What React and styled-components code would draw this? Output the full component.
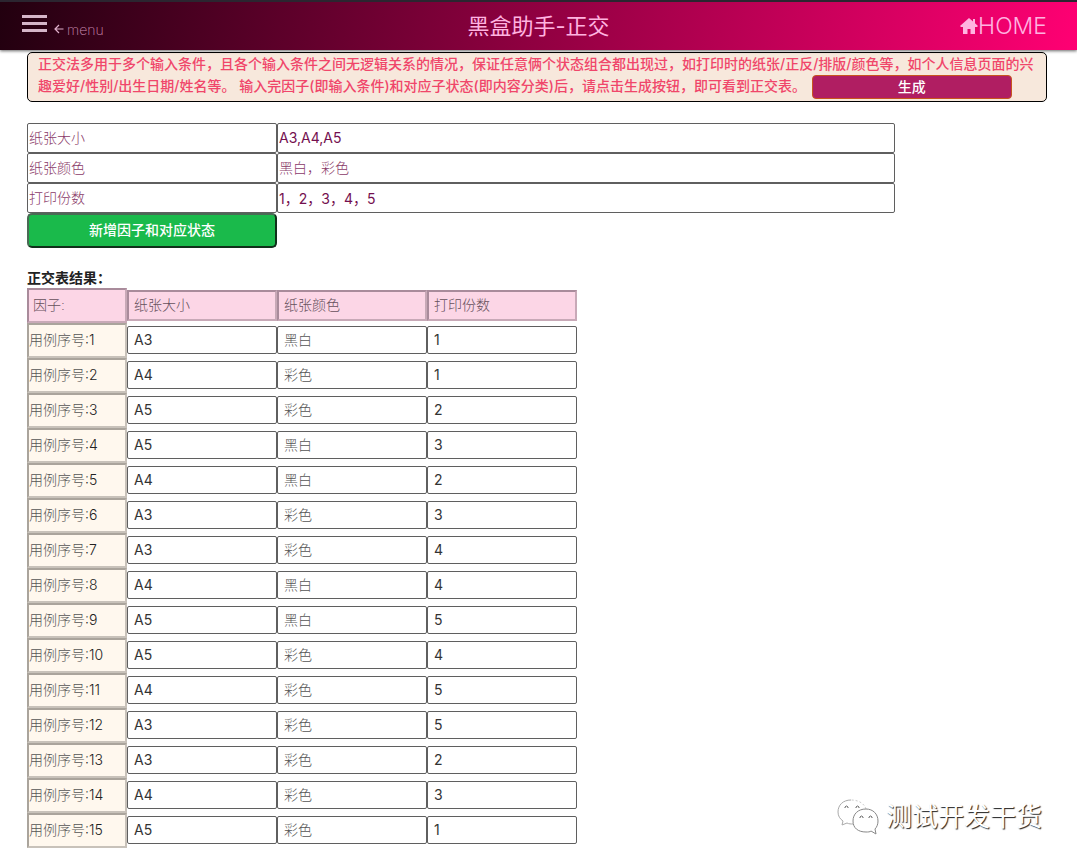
import React, { useState } from "react";
import styled, { createGlobalStyle } from "styled-components";

const GlobalStyle = createGlobalStyle`
  * {
    box-sizing: border-box;
  }
  body {
    margin: 0;
    background-color: #fff;
    color: #333;
    font-family: Inter, "Noto Sans CJK SC", sans-serif;
    font-size: 14px;
  }
  button, input {
    font-family: inherit;
    font-size: 14px;
  }
`;

const Header = styled.header`
  position: relative;
  display: grid;
  grid-template-columns: 1fr auto 1fr;
  align-items: center;
  height: 50px;
  padding: 0 22px;
  border-top: 2px solid #2b2530;
  background: linear-gradient(100deg, #22000f 0%, #ff0073 100%);
  box-shadow: 0 1px 3px rgba(0, 0, 0, 0.6);
  color: #ffb3e0;
  h1 {
    margin: 0;
    font-size: 22px;
    font-weight: 400;
    line-height: 32px;
  }
`;

const MenuButton = styled.button`
  display: flex;
  align-items: center;
  gap: 7px;
  justify-self: start;
  padding: 0 0 4px;
  border: 0;
  background: none;
  color: #c98aae;
  font-weight: 200;
  span {
    display: flex;
    align-items: center;
    gap: 3px;
    padding-top: 10px;
  }
`;

const HomeLink = styled.a`
  display: flex;
  align-items: center;
  justify-self: end;
  padding-right: 8px;
  color: #ffb3e0;
  font-size: 23px;
  font-weight: 300;
  text-decoration: none;
`;

const Main = styled.main`
  padding: 2px 30px 16px 27px;
`;

const Notice = styled.section`
  padding: 0 10px 4px;
  border: 1px solid #000;
  border-radius: 5px;
  background-color: #f7e8dc;
  color: #f0466a;
  font-weight: 500;
  line-height: 22px;
  p {
    margin: 0;
  }
`;

const MakeButton = styled.button`
  width: 200px;
  height: 24px;
  margin: -2px 0 -2px 2px;
  padding: 0;
  border: 1px solid #c8551e;
  border-radius: 4px;
  background-color: #b01e62;
  color: #fff;
  font-weight: 500;
  line-height: 20px;
  vertical-align: middle;
`;

const Factors = styled.form`
  margin: 21px 0 0;
`;

const FactorRow = styled.div`
  display: grid;
  grid-template-columns: 250px minmax(0, 618px);
`;

const FactorInput = styled.input`
  width: 100%;
  height: 30px;
  padding: ${(props) => (props.$thin ? "0 1px 2px" : "0 1px 1px")};
  border: 1px solid #5f5f5f;
  border-radius: 2px;
  background-color: #fff;
  color: ${(props) => (props.$thin ? "#8a3a68" : "#74104f")};
  font-weight: ${(props) => (props.$thin ? 200 : 400)};
`;

const AddButton = styled.button`
  display: block;
  width: 250px;
  height: 35px;
  padding: 0 0 3px;
  border: 2px solid;
  border-color: #4a6a55 #10301a #10301a #4a6a55;
  border-radius: 5px;
  background-color: #1aba4b;
  color: #fff;
  font-weight: 500;
`;

const Result = styled.table`
  margin-top: 19px;
  border-collapse: collapse;
  caption {
    color: #222;
    font-weight: 700;
    line-height: 21px;
    text-align: left;
  }
  th,
  td {
    height: 35px;
    padding: 0;
    vertical-align: middle;
  }
  td {
    padding-bottom: 2px;
  }
`;

const Cell = styled.input`
  display: block;
  width: 150px;
  height: 28px;
  padding: ${(props) => (props.$thin ? "0 6px 2px" : "0 6px")};
  border: 1px solid #5f5f5f;
  border-radius: 2px;
  background-color: #fff;
  color: ${(props) => (props.$thin ? "#555" : "#333")};
  font-weight: ${(props) => (props.$thin ? 200 : 400)};
`;

const HeadCell = styled(Cell)`
  height: 31px;
  padding: 0 5px 3px;
  border: 2px solid;
  border-color: #a98b9b #c8a9b7 #c8a9b7 #a98b9b;
  border-radius: 0;
  background-color: #fcd6e6;
  color: #66505c;
`;

const CornerCell = styled(HeadCell)`
  width: 100px;
  height: 35px;
  padding: 0 4px 3px;
`;

const IndexCell = styled.div`
  width: 100px;
  height: 35px;
  border: 2px solid;
  border-color: #aaa49c #c8c2ba #c8c2ba #aaa49c;
  background-color: #fff8ee;
  color: #555;
  font-weight: 200;
  line-height: 29px;
  text-align: left;
  white-space: nowrap;
  span {
    color: #222;
    font-weight: 300;
  }
`;

const Watermark = styled.div`
  position: absolute;
  right: 35px;
  top: 796px;
  display: flex;
  align-items: center;
  gap: 7px;
  color: #fff;
  font-size: 26px;
  line-height: 42px;
  text-shadow: 1px 1px 1px #222;
`;

const BarsIcon = () => (
  <svg width="25" height="18" viewBox="0 0 25 18" fill="#d5b5c8" aria-hidden="true">
    <path d="M0 0h25v3H0zM0 7h25v3H0zM0 14h25v3H0z" />
  </svg>
);

const ArrowIcon = () => (
  <svg width="10" height="10" viewBox="0 0 10 10" fill="none" stroke="#e0b0cc" strokeWidth="1.2" aria-hidden="true">
    <path d="M9.500 5H1M5 1 1 5l4 4" />
  </svg>
);

const HomeIcon = () => (
  <svg width="18" height="16" viewBox="0 0 18 16" fill="#ffb3e0" aria-hidden="true">
    <path d="M9 0 0 8l1 1h2v7h4.500v-5h3v5H15V9h2l1-1-3-2.700V1h-2v2.500z" />
  </svg>
);

const WechatIcon = () => (
  <svg width="42" height="36" viewBox="0 0 42 36" fill="none" stroke="#888" strokeWidth="1" aria-hidden="true">
    <path d="M29 10C27 4 21 1 14 1" stroke="#ccc" strokeDasharray="2 2" />
    <path d="M14 1C6 1 1 6 1 13c0 4 2 7 5 9l-1 4 5-2c2 1 4 1 6 1" stroke="#aaa" />
    <path d="M29 10c-8 0-13 5-13 12s5 11 13 11c2 0 4 0 5-1l5 3-1-5c2-2 3-5 3-8 0-7-5-12-12-12z" />
    <path d="M8 9V8q1.500-2 3 0v1M19 9V8q1.500-2 3 0v1M23 19v-1q1.500-2 3 0v1M32 19v-1q1.500-2 3 0v1" stroke="#666" />
  </svg>
);

const heads = ["纸张大小", "纸张颜色", "打印份数"];

const cases = [
  ["A3", "黑白", "1"],
  ["A4", "彩色", "1"],
  ["A5", "彩色", "2"],
  ["A5", "黑白", "3"],
  ["A4", "黑白", "2"],
  ["A3", "彩色", "3"],
  ["A3", "彩色", "4"],
  ["A4", "黑白", "4"],
  ["A5", "黑白", "5"],
  ["A5", "彩色", "4"],
  ["A4", "彩色", "5"],
  ["A3", "彩色", "5"],
  ["A3", "彩色", "2"],
  ["A4", "彩色", "3"],
  ["A5", "彩色", "1"],
];

const App = () => {
  const [factors, setFactors] = useState([
    { name: "纸张大小", states: "A3,A4,A5" },
    { name: "纸张颜色", states: "黑白，彩色" },
    { name: "打印份数", states: "1，2，3，4，5" },
  ]);

  const change = (idx, key, value) => {
    setFactors(factors.map((f, i) => (i === idx ? { ...f, [key]: value } : f)));
  };

  return (
    <>
      <GlobalStyle />
      <Header>
        <MenuButton type="button">
          <BarsIcon />
          <span>
            <ArrowIcon />
            menu
          </span>
        </MenuButton>
        <h1>黑盒助手-正交</h1>
        <HomeLink href="#home">
          <HomeIcon />
          HOME
        </HomeLink>
      </Header>
      <Main>
        <Notice>
          <p>
            正交法多用于多个输入条件，且各个输入条件之间无逻辑关系的情况，保证任意俩个状态组合都出现过，如打印时的纸张/正反/排版/颜色等，如个人信息页面的兴趣爱好/性别/出生日期/姓名等。
            输入完因子(即输入条件)和对应子状态(即内容分类)后，请点击生成按钮，即可看到正交表。{" "}
            <MakeButton type="button">生成</MakeButton>
          </p>
        </Notice>
        <Factors onSubmit={(e) => e.preventDefault()}>
          {factors.map((f, i) => (
            <FactorRow key={i}>
              <FactorInput
                $thin
                aria-label={`因子${i + 1}`}
                value={f.name}
                onChange={(e) => change(i, "name", e.target.value)}
              />
              <FactorInput
                $thin={i === 1}
                aria-label={`状态${i + 1}`}
                value={f.states}
                onChange={(e) => change(i, "states", e.target.value)}
              />
            </FactorRow>
          ))}
          <AddButton
            type="button"
            onClick={() => setFactors([...factors, { name: "", states: "" }])}
          >
            新增因子和对应状态
          </AddButton>
        </Factors>
        <Result>
          <caption>正交表结果：</caption>
          <thead>
            <tr>
              <th>
                <CornerCell $thin readOnly aria-label="因子" value="因子:" />
              </th>
              {heads.map((h) => (
                <th key={h}>
                  <HeadCell $thin readOnly aria-label={h} value={h} />
                </th>
              ))}
            </tr>
          </thead>
          <tbody>
            {cases.map((row, i) => (
              <tr key={i}>
                <th scope="row">
                  <IndexCell>
                    用例序号<span>:{i + 1}</span>
                  </IndexCell>
                </th>
                {row.map((v, j) => (
                  <td key={j}>
                    <Cell $thin={j === 1} readOnly aria-label={heads[j]} value={v} />
                  </td>
                ))}
              </tr>
            ))}
          </tbody>
        </Result>
      </Main>
      <Watermark>
        <WechatIcon />
        测试开发干货
      </Watermark>
    </>
  );
};

export default App;
